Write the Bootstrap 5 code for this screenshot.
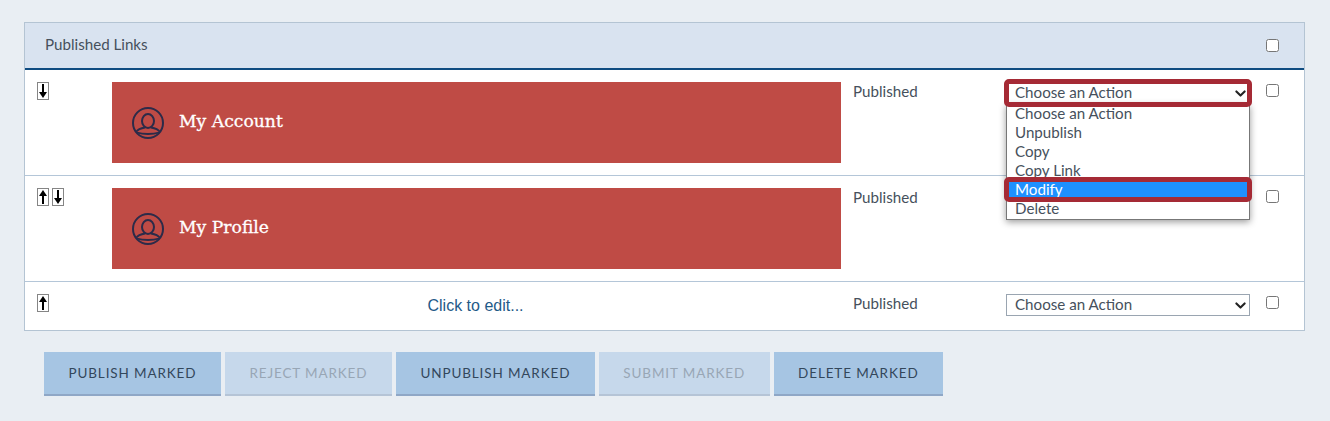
<!DOCTYPE html>
<html lang="en">
<head>
<meta charset="utf-8">
<title>Published Links</title>
<link rel="stylesheet" href="https://cdn.jsdelivr.net/npm/bootstrap@5.3.0/dist/css/bootstrap.min.css">
<style>
body{background:#e9eef3;font-family:"Lato","Noto Sans",sans-serif;color:#46505c;font-size:15.15px;margin:0;padding:22px 25px 0 24px;line-height:19px}
.lp-panel{border:1px solid #b4c4d3;background:#fff}
.lp-head{background:#d9e3f0;border-bottom:2px solid #0f4c81;height:47px;padding-left:20px;padding-bottom:3px}
.lp-row{border-bottom:1px solid #b4c6d8;padding-top:12px}
.lp-row:last-child{border-bottom:0;height:48px}
.lp-row-tall{height:106px}
.lp-move{width:87px;padding-left:12px;gap:3px}
.lp-main{width:729px}
.lp-status{width:153px;margin-left:12px}
.lp-action{width:244px;position:relative}
.lp-check{width:54px;padding-left:16px;line-height:0}
.lp-check input{margin:2px 0 0;width:13px;height:13px}
.lp-headcheck{width:54px;padding-left:16px;line-height:0;padding-top:3px}
.lp-headcheck input{margin:0;width:13px;height:13px}
.lp-arrow{width:12px;height:18px;border:1px solid #858585;background:#fff;display:block}
.lp-arrow svg{display:block;width:10px;height:16px}
.lp-banner{background:#bf4b45;height:81px;padding-left:20px;gap:15px;color:#fff;font-family:"DejaVu Serif",serif;font-size:17.2px;-webkit-text-stroke:.3px #fff}
.lp-banner svg{width:32px;height:32px;flex:none}
.lp-banner span{padding-bottom:2px}
.lp-edit{font-family:"Liberation Sans",sans-serif;font-size:16px;color:#1f5a88;text-align:center;padding:2px 2px 0 0;text-decoration:none;display:block}
.lp-select{height:22px;padding:0 20px 2px 8px;border:1px solid #9aa5b1;border-radius:0;font-size:15.15px;line-height:18px;color:#46505c;background-image:url("data:image/svg+xml,%3csvg xmlns='http://www.w3.org/2000/svg' viewBox='0 0 16 16'%3e%3cpath fill='none' stroke='%23222' stroke-linecap='round' stroke-linejoin='round' stroke-width='3' d='m2 5 6 6 6-6'/%3e%3c/svg%3e");background-position:right 3px center;background-size:11px 11px;font-family:inherit;display:block;margin-top:0}
.lp-menu{position:absolute;top:22px;left:0;width:244px;background:#fff;border:1px solid #777;box-shadow:0 2px 7px rgba(0,0,0,.4);z-index:5;padding:0;margin:0;list-style:none}
.lp-menu li{height:19px;padding-left:8px;line-height:17px;white-space:nowrap;color:#46505c}
.lp-menu li.lp-on{background:#1e90ff;color:#fff;position:relative;line-height:17px}
.lp-ring{position:absolute;border:5px solid #a52a35;border-radius:5px;pointer-events:none;z-index:6}
.lp-ring-select{left:-2px;right:-2px;top:-3px;height:28px}
.lp-ring-opt{left:-3px;right:-3px;top:-4px;height:25px}
.lp-btn{background:#a6c5e3;border:0;border-bottom:2px solid #8fa7c6;border-radius:0;height:44px;padding:0 24.5px;font-size:13.5px;letter-spacing:.87px;color:#33475b;text-transform:uppercase;font-family:inherit}
.lp-btn:disabled{background:#c6d8eb;border-bottom-color:#b5c4d6;color:#98a6b5;opacity:1}
.lp-bar{padding:21px 0 0 20px;gap:4px}
</style>
</head>
<body>
<section class="lp-panel">
  <div class="lp-head d-flex align-items-center">
    <div class="flex-grow-1">Published Links</div>
    <div class="lp-headcheck"><input type="checkbox" aria-label="Select all"></div>
  </div>

  <div class="lp-row lp-row-tall d-flex">
    <div class="lp-move d-flex align-items-start">
      <span class="lp-arrow"><svg viewBox="0 0 10 16"><path d="M5 1v9" stroke="#000" stroke-width="2"/><path d="M1 9h8l-4 6z" fill="#000"/></svg></span>
    </div>
    <div class="lp-main">
      <div class="lp-banner d-flex align-items-center">
        <svg viewBox="0 0 32 32" fill="none" stroke="#2c2b49" stroke-width="2"><circle cx="16" cy="16" r="15"/><ellipse cx="16" cy="14" rx="6" ry="7"/><path d="M4 25c2-3 6-4 9-4.500M28 25c-2-3-6-4-9-4.500M5 25.500c6 2 16 2 22 0" stroke-width="1.800"/></svg>
        <span>My Account</span>
      </div>
    </div>
    <div class="lp-status">Published</div>
    <div class="lp-action">
      <select class="form-select lp-select" aria-label="Action"><option>Choose an Action</option></select>
      <div class="lp-ring lp-ring-select"></div>
      <ul class="lp-menu">
        <li>Choose an Action</li>
        <li>Unpublish</li>
        <li>Copy</li>
        <li>Copy Link</li>
        <li class="lp-on">Modify<div class="lp-ring lp-ring-opt"></div></li>
        <li>Delete</li>
      </ul>
    </div>
    <div class="lp-check"><input type="checkbox" aria-label="Select"></div>
  </div>

  <div class="lp-row lp-row-tall d-flex">
    <div class="lp-move d-flex align-items-start">
      <span class="lp-arrow"><svg viewBox="0 0 10 16"><path d="M5 15V6" stroke="#000" stroke-width="2"/><path d="M1 7h8L5 1z" fill="#000"/></svg></span>
      <span class="lp-arrow"><svg viewBox="0 0 10 16"><path d="M5 1v9" stroke="#000" stroke-width="2"/><path d="M1 9h8l-4 6z" fill="#000"/></svg></span>
    </div>
    <div class="lp-main">
      <div class="lp-banner d-flex align-items-center">
        <svg viewBox="0 0 32 32" fill="none" stroke="#2c2b49" stroke-width="2"><circle cx="16" cy="16" r="15"/><ellipse cx="16" cy="14" rx="6" ry="7"/><path d="M4 25c2-3 6-4 9-4.500M28 25c-2-3-6-4-9-4.500M5 25.500c6 2 16 2 22 0" stroke-width="1.800"/></svg>
        <span>My Profile</span>
      </div>
    </div>
    <div class="lp-status">Published</div>
    <div class="lp-action">
      <select class="form-select lp-select" aria-label="Action"><option>Choose an Action</option></select>
    </div>
    <div class="lp-check"><input type="checkbox" aria-label="Select"></div>
  </div>

  <div class="lp-row d-flex">
    <div class="lp-move d-flex align-items-start">
      <span class="lp-arrow"><svg viewBox="0 0 10 16"><path d="M5 15V6" stroke="#000" stroke-width="2"/><path d="M1 7h8L5 1z" fill="#000"/></svg></span>
    </div>
    <div class="lp-main"><a class="lp-edit" href="#">Click to edit...</a></div>
    <div class="lp-status">Published</div>
    <div class="lp-action">
      <select class="form-select lp-select" aria-label="Action"><option>Choose an Action</option></select>
    </div>
    <div class="lp-check"><input type="checkbox" aria-label="Select"></div>
  </div>
</section>

<div class="lp-bar d-flex">
  <button class="btn lp-btn" type="button">Publish Marked</button>
  <button class="btn lp-btn" type="button" disabled>Reject Marked</button>
  <button class="btn lp-btn" type="button">Unpublish Marked</button>
  <button class="btn lp-btn" type="button" disabled>Submit Marked</button>
  <button class="btn lp-btn" type="button">Delete Marked</button>
</div>
<script src="https://cdn.jsdelivr.net/npm/bootstrap@5.3.0/dist/js/bootstrap.bundle.min.js"></script>
</body>
</html>
